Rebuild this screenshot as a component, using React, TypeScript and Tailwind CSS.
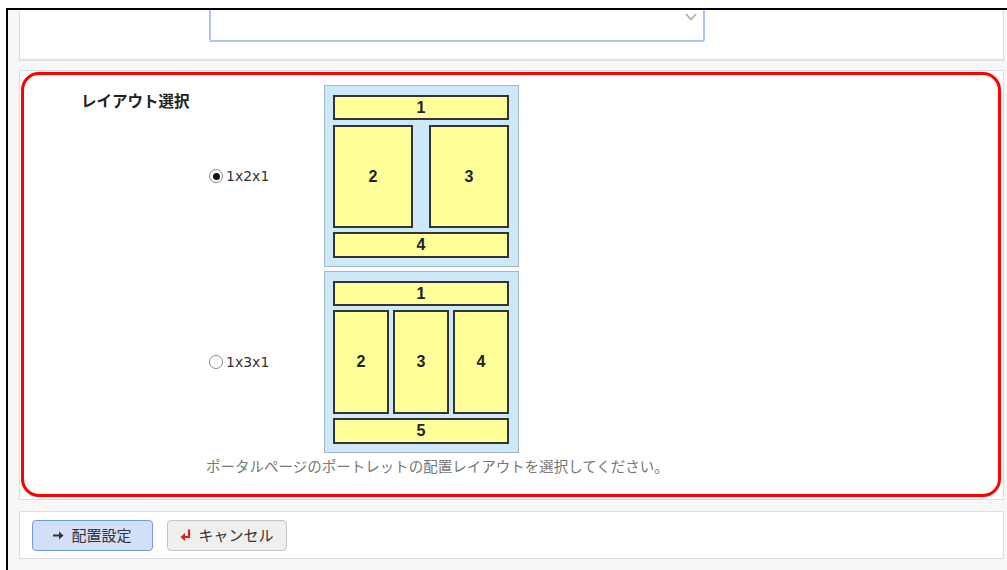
import React, { useState } from 'react';

const jp = { fontFamily: '"Noto Sans CJK JP", "Liberation Sans", sans-serif' };

const Box: React.FC<{ n: number; className: string }> = ({ n, className }) => (
  <div
    className={`flex items-center justify-center bg-[#ffff99] border-2 border-[#333] text-[16px] font-bold text-[#222] ${className}`}
    style={{ fontFamily: '"Liberation Sans", Arial, sans-serif' }}
  >
    {n}
  </div>
);

const Layout121: React.FC = () => (
  <div className="w-[195px] h-[182px] bg-[#cde8f8] border border-[#a9b4bf] pt-[9px] pl-[8px] pr-[9px] flex flex-col gap-[5px]">
    <Box n={1} className="h-[25px]" />
    <div className="flex justify-between gap-[16px] h-[103px]">
      <Box n={2} className="flex-1" />
      <Box n={3} className="flex-1" />
    </div>
    <Box n={4} className="h-[26px] -mt-[1px]" />
  </div>
);

const Layout131: React.FC = () => (
  <div className="w-[195px] h-[182px] bg-[#cde8f8] border border-[#a9b4bf] pt-[9px] pl-[8px] pr-[9px] flex flex-col gap-[4px]">
    <Box n={1} className="h-[25px]" />
    <div className="flex gap-[4px] h-[104px]">
      <Box n={2} className="flex-1" />
      <Box n={3} className="flex-1" />
      <Box n={4} className="flex-1" />
    </div>
    <Box n={5} className="h-[26px]" />
  </div>
);

const Radio: React.FC<{ checked: boolean; onClick: () => void }> = ({ checked, onClick }) => (
  <span
    onClick={onClick}
    className="w-[14px] h-[14px] rounded-full border border-[#8a8a8a] bg-white flex items-center justify-center cursor-pointer"
  >
    {checked && <span className="w-[7px] h-[7px] rounded-full bg-[#111]" />}
  </span>
);

const App: React.FC = () => {
  const [layout, setLayout] = useState('1x2x1');

  return (
    <div className="w-[1007px] h-[570px] bg-white pt-[8px] pl-[6px] overflow-hidden" style={jp}>
      <div className="h-[562px] border-t-2 border-l-2 border-black bg-[#f7f7f7] pl-[11px] pr-[3px] flex flex-col">
        {/* top panel (cut off) */}
        <div className="h-[50px] bg-white border-x border-b border-[#dedede] shadow-[0_1px_1px_rgba(0,0,0,0.08)] pl-[189px]">
          <div className="w-[496px] h-[32px] border-x-2 border-b-2 border-[#a9c5f5] rounded-b-[3px] flex justify-end pr-[6px] pt-[3px]">
            <svg width="12" height="8" viewBox="0 0 12 8">
              <path d="M1 1 L6 6.5 L11 1" fill="none" stroke="#b0b0b0" strokeWidth="1.8" />
            </svg>
          </div>
        </div>

        {/* layout panel */}
        <div className="mt-[10px] h-[430px] bg-white border border-[#dedede] pl-[1px] pt-[1px] pr-[2px] pb-[2px]">
          <div className="h-full border-[3px] border-[#ff0000] rounded-[18px] flex">
            <div className="w-[182px] pl-[57px] pt-[14px] text-[15.5px] font-bold text-[#222] whitespace-nowrap">
              レイアウト選択
            </div>
            <div className="pt-[10px] flex flex-col">
              <div className="flex items-center">
                <label className="w-[118px] pl-[3px] flex items-center gap-[3px] text-[#333]">
                  <Radio checked={layout === '1x2x1'} onClick={() => setLayout('1x2x1')} />
                  <span style={{ fontFamily: '"DejaVu Sans", sans-serif' }} className="text-[14px]">1x2x1</span>
                </label>
                <Layout121 />
              </div>
              <div className="flex items-center mt-[4px]">
                <label className="w-[118px] pl-[3px] flex items-center gap-[3px] text-[#333]">
                  <Radio checked={layout === '1x3x1'} onClick={() => setLayout('1x3x1')} />
                  <span style={{ fontFamily: '"DejaVu Sans", sans-serif' }} className="text-[14px]">1x3x1</span>
                </label>
                <Layout131 />
              </div>
              <p className="mt-[3px] text-[14.5px] text-[#777] leading-[20px] whitespace-nowrap">
                ポータルページのポートレットの配置レイアウトを選択してください。
              </p>
            </div>
          </div>
        </div>

        {/* buttons panel */}
        <div className="mt-[11px] h-[48px] bg-white border border-[#dedede] flex items-center gap-[14px] pl-[12px]">
          <button className="w-[121px] h-[31px] rounded-[4px] bg-[#d3dff6] border border-[#6f9be2] flex items-center justify-center gap-[7px] text-[15px] text-[#333]">
            <svg width="11" height="9" viewBox="0 0 11 9">
              <path d="M0 4.5 H7" stroke="#333" strokeWidth="2" />
              <path d="M6 0.5 L10.5 4.5 L6 8.5 Z" fill="#333" />
            </svg>
            配置設定
          </button>
          <button className="w-[120px] h-[31px] rounded-[4px] bg-[#efefef] border border-[#c4c4c4] flex items-center justify-center gap-[7px] text-[15px] text-[#333]">
            <svg width="11" height="13" viewBox="0 0 11 13">
              <path d="M9 0.5 V8 H4" fill="none" stroke="#e21b1b" strokeWidth="2.2" />
              <path d="M5 4 L0.5 8 L5 12 Z" fill="#e21b1b" />
            </svg>
            キャンセル
          </button>
        </div>
      </div>
    </div>
  );
};

export default App;
